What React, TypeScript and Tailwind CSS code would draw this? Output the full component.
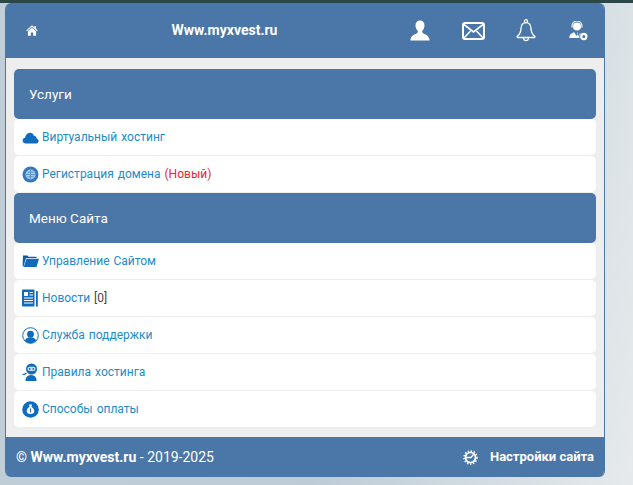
const font = { fontFamily: 'Roboto, "Noto Sans", sans-serif' };

const CloudIcon = () => (
  <svg width="17" height="13" viewBox="0 0 18 14">
    <path
      fill="#0f6cbd"
      d="M4 13.500C1.800 13.500 0.500 12 0.500 10.300C0.500 8.700 1.600 7.400 3.200 7.200C3.500 4.900 5.300 1.800 8.500 1.800C10.800 1.800 12 3.200 12.600 5C14.500 5 15.500 6.500 15.600 8C16.900 8.500 17.700 9.400 17.700 10.700C17.700 12.300 16.500 13.500 14.800 13.500Z"
    />
  </svg>
);

const GlobeIcon = () => (
  <svg width="17" height="17" viewBox="0 0 17 17">
    <circle cx="8.500" cy="8.500" r="8" fill="#2f78c4" />
    <circle cx="8.500" cy="8.500" r="5" fill="#a9c8e4" />
    <path d="M4 8.500h9M8.500 4v9M5.500 6.200h6M5.500 10.800h6" stroke="#5b93cc" strokeWidth="0.900" />
  </svg>
);

const FolderIcon = () => (
  <svg width="17" height="12" viewBox="0 0 17 12">
    <path fill="#0b5cab" d="M1 0.500h4.500l1 1.300h8V3H4L1.500 11.500H0.600Z" />
    <path fill="#0f6cbd" d="M4.500 3.800H17L14.500 12H1.700Z" />
  </svg>
);

const NewsIcon = () => (
  <svg width="16" height="18" viewBox="0 0 16 18">
    <rect x="0" y="0.500" width="12.500" height="17" rx="1" fill="#0f6cbd" />
    <rect x="14" y="2" width="1.800" height="15.500" fill="#0f6cbd" />
    <rect x="2" y="3" width="4" height="4" fill="#fff" />
    <path d="M7.500 3.500h3.500M7.500 6h3.500M2 9h9M2 11.500h9M2 14h9" stroke="#fff" strokeWidth="1.100" />
  </svg>
);

const SupportIcon = () => (
  <svg width="17" height="17" viewBox="0 0 17 17">
    <circle cx="8.500" cy="8.500" r="7.800" fill="#fff" stroke="#0f6cbd" strokeWidth="1" />
    <circle cx="8.500" cy="7.200" r="3.400" fill="#0f6cbd" />
    <path fill="#0f6cbd" d="M3 13.500c.7-2.500 3-3.200 5.500-3.200s4.800.7 5.500 3.200c-1.400 1.700-3.400 2.700-5.500 2.700S4.400 15.200 3 13.500Z" />
  </svg>
);

const RulesIcon = () => (
  <svg width="18" height="18" viewBox="0 0 18 18">
    <path fill="#0f6cbd" d="M3.500 18c-.3-3.200 1.900-6 5.500-6s5.900 2.800 5.500 6Z" />
    <circle cx="9.500" cy="6" r="5.500" fill="#0f6cbd" />
    <rect x="5.500" y="3.800" width="8" height="4.200" rx="2" fill="#cfe2f3" />
    <circle cx="7.700" cy="6" r="0.900" fill="#0f6cbd" />
    <circle cx="11.300" cy="6" r="0.900" fill="#0f6cbd" />
    <path d="M0.500 11.500c1.500-.1 3-.5 4-1.500" stroke="#0f6cbd" strokeWidth="1.200" fill="none" />
  </svg>
);

const PayIcon = () => (
  <svg width="17" height="17" viewBox="0 0 17 17">
    <circle cx="8.500" cy="8.500" r="8.300" fill="#0f6cbd" />
    <path fill="#fff" d="M7 3.500h3L9.500 6c1.800 1 2.800 2.500 2.800 4.200 0 1.700-1.300 2.800-3.800 2.800s-3.800-1.100-3.800-2.800C4.700 8.500 5.700 7 7.500 6Z" />
    <path d="M8.500 7.500v3.800" stroke="#0f6cbd" strokeWidth="1" />
  </svg>
);

const HomeIcon = () => (
  <svg width="12" height="11" viewBox="0 0 12 11">
    <path fill="#fff" d="M6 0.300 0.200 5.400l.7.800L6 1.800l5.100 4.400.7-.8-2-1.800V1H8.500v1.400Z" />
    <path fill="#fff" d="M6 2.800 1.900 6.300v4.400h3V7.500h2.200v3.200h3V6.300Z" />
  </svg>
);

const UserIcon = () => (
  <svg width="20" height="21" viewBox="0 0 20 21">
    <path
      fill="#fff"
      d="M10 0.500c2.900 0 4.500 2.100 4.500 5 0 2.200-.9 4.300-2.200 5.300-.3 1.200-.1 2.100 1.100 2.800 2 1 5.400 1.900 6.100 5.800.1.700.1 1.100.1 1.100H.4s0-.4.1-1.100c.7-3.900 4.100-4.800 6.100-5.800 1.200-.7 1.400-1.600 1.100-2.800C6.400 9.800 5.500 7.700 5.500 5.500c0-2.900 1.600-5 4.500-5Z"
    />
  </svg>
);

const MailIcon = () => (
  <svg width="23" height="18" viewBox="0 0 23 18" fill="none" stroke="#fff" strokeWidth="2">
    <rect x="1" y="1" width="21" height="16" rx="2" />
    <path d="M2 2.500 11.500 10 21 2.500M2 16l6.500-7M21 16l-6.500-7" strokeWidth="1.600" />
  </svg>
);

const BellIcon = () => (
  <svg width="20" height="23" viewBox="0 0 20 23" fill="none" stroke="#fff" strokeWidth="1.300">
    <circle cx="10" cy="2.200" r="1.500" />
    <path d="M10 3.700c-3.300 0-4.700 2.400-4.900 5.400-.2 3.500-1 6-3.800 8.200-.6.500-.3 1.200.5 1.200h16.400c.8 0 1.100-.7.500-1.200-2.800-2.200-3.600-4.700-3.800-8.200-.2-3-1.600-5.400-4.900-5.400Z" />
    <path d="M7.500 19c.2 1.800 1.200 2.700 2.500 2.700s2.300-.9 2.500-2.700" />
  </svg>
);

const AdminIcon = () => (
  <svg width="19" height="20" viewBox="0 0 19 20">
    <circle cx="8" cy="5.500" r="4" fill="#fff" />
    <path d="M3 6.500V5a5 5 0 0 1 10 0v1.500" fill="none" stroke="#fff" strokeWidth="1.100" />
    <path fill="#fff" d="M0.300 17c0-3.500 2.500-5.300 5-5.800L7.500 15l1-1.500-.5-2h.8l-.1 2 1 1.500 1.200-2.800.9.300c-1.500 1-2 3-1.200 4.500Z" />
    <circle cx="14.800" cy="15.500" r="2.600" fill="none" stroke="#fff" strokeWidth="2.200" />
  </svg>
);

const GearIcon = () => (
  <svg width="15" height="15" viewBox="0 0 15 15" fill="none" stroke="#fff">
    <circle cx="7.500" cy="7.500" r="5" strokeWidth="1.700" />
    <circle cx="7.500" cy="7.500" r="6.500" strokeWidth="1.500" strokeDasharray="1.500 1.500" />
    <path d="M3 7.500h5l2.500-3" strokeWidth="1.300" />
  </svg>
);

const Row = ({ icon, children }: { icon: React.ReactNode; children: React.ReactNode }) => (
  <div className="flex h-9 items-center rounded-[5px] bg-white pl-2 text-[12px] text-[#1b8ccb]">
    <span className="flex w-5 shrink-0 justify-start">{icon}</span>
    <span className="[word-spacing:1px]">{children}</span>
  </div>
);

const SectionTitle = ({ title }: { title: string }) => (
  <div className="flex h-[50px] items-center rounded-[5px] bg-[#4a76a8] pl-[15px] text-[13.5px] text-white">
    {title}
  </div>
);

export default function App() {
  return (
    <div
      className="h-[485px] w-[633px] overflow-hidden bg-[linear-gradient(100deg,#c0ced8_0%,#bccbd6_55%,#e6eaec_100%)]"
      style={font}
    >
      <div className="h-[3px] bg-[#2b4747]" />
      <div className="ml-[5px] w-[600px] overflow-hidden rounded-[6px] border-x border-[#4a76a8]">
        <header className="flex h-[55px] items-center bg-[#4a76a8] text-white">
          <span className="ml-[20px] flex w-3">
            <HomeIcon />
          </span>
          <span className="ml-[133px] w-[107px] whitespace-nowrap text-center text-[14px] font-bold">
            Www.myxvest.ru
          </span>
          <div className="ml-auto mr-[16px] flex items-center">
            <UserIcon />
            <span className="ml-[32px]">
              <MailIcon />
            </span>
            <span className="ml-[31px]">
              <BellIcon />
            </span>
            <span className="ml-[33px]">
              <AdminIcon />
            </span>
          </div>
        </header>
        <main className="flex h-[379px] flex-col bg-[#eeeeee] px-2 pt-[11px]">
          <SectionTitle title="Услуги" />
          <div className="flex flex-col gap-px">
            <Row icon={<CloudIcon />}>Виртуальный хостинг</Row>
            <Row icon={<GlobeIcon />}>
              Регистрация домена <span className="text-[#f0232d]">(Новый)</span>
            </Row>
          </div>
          <div className="mt-px">
            <SectionTitle title="Меню Сайта" />
          </div>
          <div className="flex flex-col gap-px">
            <Row icon={<FolderIcon />}>Управление Сайтом</Row>
            <Row icon={<NewsIcon />}>
              Новости <span className="text-[#444]">[0]</span>
            </Row>
            <Row icon={<SupportIcon />}>Служба поддержки</Row>
            <Row icon={<RulesIcon />}>Правила хостинга</Row>
            <Row icon={<PayIcon />}>Способы оплаты</Row>
          </div>
        </main>
        <footer className="flex h-10 items-center justify-between bg-[#4a76a8] px-[10px] text-[14px] text-white">
          <span>
            <b>© Www.myxvest.ru</b> - 2019-2025
          </span>
          <span className="flex items-center gap-[12px] text-[13px] font-bold">
            <GearIcon />
            Настройки сайта
          </span>
        </footer>
      </div>
    </div>
  );
}
